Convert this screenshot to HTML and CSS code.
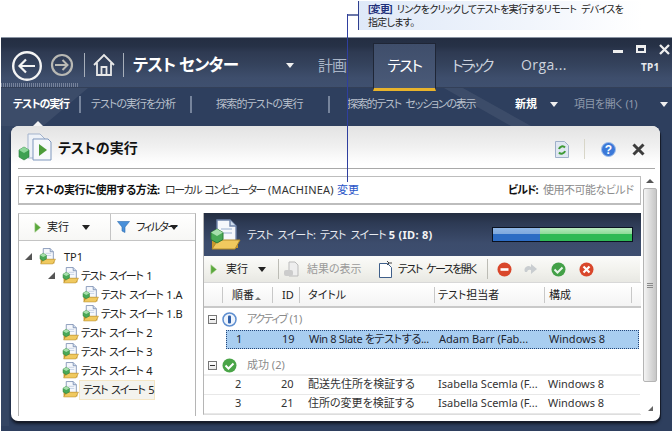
FILE: index.html
```html
<!DOCTYPE html>
<html lang="ja">
<head>
<meta charset="utf-8">
<title>テスト センター</title>
<link rel="stylesheet" href="styles.css">
</head>
<body>
<svg class="defs" width="0" height="0">
  <defs>
    <symbol id="suite" viewBox="0 0 32 32">
      <path d="M8 1h13l6 6v17H8z" fill="#f6f8fc" stroke="#6f84aa" stroke-width="1.400"/>
      <path d="M21 1v6h6" fill="#cfdcec" stroke="#6f84aa" stroke-width="1.400"/>
      <path d="M12 10h11M14 14h9" stroke="#b9c8de" stroke-width="1.400"/>
      <path d="M3 21h26v8H3z" fill="#c9982c"/>
      <path d="M9 21h22l-5 9H3z" fill="#f0c95f" stroke="#b58c2c"/>
      <path d="M8 10l6 3.500v7L8 24l-6-3.500v-7z" fill="#49a957" stroke="#2c7a35"/>
      <path d="M8 10l6 3.500L8 17l-6-3.500z" fill="#a6dfac"/>
    </symbol>
    <symbol id="play" viewBox="0 0 8 12">
      <path d="M1 .5 7.500 6 1 11.500z" fill="#5aa83c" stroke="#a9cf8f" stroke-width=".6"/>
    </symbol>
  </defs>
</svg>
<div class="callout">
  <p class="callout-text"><b>[変更]</b> リンクをクリックしてテストを実行するリモート デバイスを<br>指定します。</p>
</div>
<div class="leader-h"></div>
<div class="leader-v"></div>

<div class="app">
  <svg class="decor" width="672" height="394" viewBox="0 0 672 394">
    <path d="M0 88 0 0H146L42 88z" fill="#fff" opacity=".07"/>
    <path d="M355 0 H372 L530 88 H510z" fill="#fff" opacity=".07"/>
    <path d="M510 88H530L565 116H535z" fill="#fff" opacity=".05"/>
    <path d="M0 88V388H8V120L42 88z" fill="#fff" opacity=".03"/>
  </svg>
  <header class="top">
    <svg class="ic-back" width="32" height="32" viewBox="0 0 32 32"><circle cx="16" cy="16" r="13.800" fill="none" stroke="#f4f4f4" stroke-width="2.400"/><path d="M24 16H9M15 9.500 8.500 16l6.500 6.500" fill="none" stroke="#f4f4f4" stroke-width="2.200"/></svg>
    <svg class="ic-fwd" width="24" height="24" viewBox="0 0 24 24"><circle cx="12" cy="12" r="10" fill="none" stroke="#b9b9b4" stroke-width="2.200"/><path d="M5 12h13M12.500 7l5 5-5 5" fill="none" stroke="#b9b9b4" stroke-width="2"/></svg>
    <i class="vsep sep-a"></i>
    <svg class="ic-home" width="22" height="24" viewBox="0 0 22 24"><path d="M1 12 11 2l10 10M4 10v12h14V10M8.500 22v-8h5v8" fill="none" stroke="#e8e8e8" stroke-width="1.800"/></svg>
    <i class="vsep sep-b"></i>
    <h1 class="app-title">テスト センター</h1>
    <i class="tri tri-title"></i>
    <nav class="tabs">
      <span class="tab tab-plan">計画</span>
      <span class="tab tab-on">テスト</span>
      <span class="tab tab-track">トラック</span>
      <span class="tab tab-org">Orga...</span>
    </nav>
    <div class="win">
      <div class="win-btns">
        <i class="w-min"></i><i class="w-max"></i>
        <svg width="11" height="11" viewBox="0 0 11 11"><path d="M1 1l9 9M10 1l-9 9" stroke="#eee" stroke-width="2.300"/></svg>
      </div>
      <span class="tp">TP1</span>
    </div>
    <i class="dither"></i>
  </header>
  <nav class="subnav">
    <span class="sub sub-a">テストの実行</span>
    <i class="subsep"></i>
    <span class="sub sub-b">テストの実行を分析</span>
    <i class="subsep"></i>
    <span class="sub sub-c">探索的テストの実行</span>
    <i class="subsep"></i>
    <span class="sub sub-d">探索的テスト セッションの表示</span>
    <span class="sub sub-new">新規</span>
    <i class="tri tri-new"></i>
    <span class="sub sub-open">項目を開く (1)</span>
    <i class="tri tri-open"></i>
    <i class="caret"></i>
  </nav>

  <section class="card">
    <div class="card-head">
      <svg width="36" height="32" viewBox="0 0 36 32" class="ic-run">
        <path d="M10 2h12l5 5v19H10z" fill="#eef2f8" stroke="#a3b3cc"/>
        <path d="M15 7h15l3 3v18H15z" fill="#f7f9fc" stroke="#7f97bd"/>
        <path d="M21 12l8 6-8 6z" fill="#4c9c3a"/>
        <path d="M6 15l5 3v7l-5 3-5-3v-7z" fill="#3fa152" stroke="#2a7a3c" stroke-width=".6"/>
        <path d="M6 15l5 3-5 3-5-3z" fill="#8ed69a"/>
      </svg>
      <h2 class="card-title">テストの実行</h2>
      <div class="head-tools">
        <svg width="14" height="17" viewBox="0 0 14 17"><path d="M.5.500h9l4 4v12H.5z" fill="#dfe7f2" stroke="#9fb0c9"/><path d="M4 8a3.500 3.500 0 0 1 6-1.500M10 10a3.500 3.500 0 0 1-6 1.500" fill="none" stroke="#3e9a35" stroke-width="2"/></svg>
        <i class="head-sep"></i>
        <svg class="ic-help" width="15" height="15" viewBox="0 0 15 15"><circle cx="7.500" cy="7.500" r="7" fill="#3b78d8" stroke="#9dbdea"/><text x="7.500" y="11.500" text-anchor="middle" class="help-q">?</text></svg>
        <svg class="ic-close" width="13" height="13" viewBox="0 0 13 13"><path d="M1.500 1.500l10 10M11.500 1.500l-10 10" stroke="#3d3d3d" stroke-width="3"/></svg>
      </div>
    </div>
    <div class="card-body">
      <div class="content">
        <div class="info">
          <b class="info-label">テストの実行に使用する方法:</b>
          <span class="info-val"><span class="tight">ローカル コンピューター</span> (MACHINEA)</span>
          <a class="info-link">変更</a>
          <b class="info-build">ビルド:</b>
          <span class="info-na">使用不可能なビルド</span>
        </div>
        <div class="split">
          <aside class="left">
            <div class="left-tools">
              <div class="lt lt-run"><svg width="7" height="11"><use href="#play"/></svg><span>実行</span><i class="tri tri-dark"></i></div>
              <div class="lt lt-filter"><svg width="13" height="12" viewBox="0 0 13 12"><path d="M.5.500h12L8 6v5.500L5 10V6z" fill="#4a90d9" stroke="#2d6db0" stroke-width=".6"/></svg><span>フィルター</span><i class="tri tri-dark"></i></div>
            </div>
            <ul class="tree">
              <li class="node l0"><i class="exp"></i><svg class="fold" width="17" height="17"><use href="#suite"/></svg><span class="lbl">TP1</span></li>
              <li class="node l1"><i class="exp"></i><svg class="fold" width="17" height="17"><use href="#suite"/></svg><span class="lbl">テスト スイート <span class="num">1</span></span></li>
              <li class="node l2"><svg class="fold" width="17" height="17"><use href="#suite"/></svg><span class="lbl">テスト スイート <span class="num">1.A</span></span></li>
              <li class="node l2"><svg class="fold" width="17" height="17"><use href="#suite"/></svg><span class="lbl">テスト スイート <span class="num">1.B</span></span></li>
              <li class="node l1 leaf"><svg class="fold" width="17" height="17"><use href="#suite"/></svg><span class="lbl">テスト スイート <span class="num">2</span></span></li>
              <li class="node l1 leaf"><svg class="fold" width="17" height="17"><use href="#suite"/></svg><span class="lbl">テスト スイート <span class="num">3</span></span></li>
              <li class="node l1 leaf"><svg class="fold" width="17" height="17"><use href="#suite"/></svg><span class="lbl">テスト スイート <span class="num">4</span></span></li>
              <li class="node l1 leaf"><svg class="fold" width="17" height="17"><use href="#suite"/></svg><span class="lbl sel">テスト スイート <span class="num">5</span></span></li>
            </ul>
          </aside>
          <main class="right">
            <div class="suite-head">
              <svg width="32" height="32"><use href="#suite"/></svg>
              <span class="suite-name"><span class="tight-s">テスト スイート: テスト スイート</span> <b>5 (ID: 8)</b></span>
              <div class="bar"><div class="bar-blue" style="width:34%"></div><div class="bar-green"></div></div>
            </div>
            <div class="tools">
              <svg width="7" height="11"><use href="#play"/></svg>
              <span class="t-run">実行</span>
              <i class="tri tri-dark tri-run"></i>
              <i class="tsep tsep-a"></i>
              <svg width="17" height="17" viewBox="0 0 17 17"><path d="M6 1h6l3 3v11H6z" fill="#eee" stroke="#bbb"/><rect x="1" y="9" width="9" height="6" rx="2" fill="#ccc"/></svg>
              <span class="t-res">結果の表示</span>
              <svg class="t-doc" width="15" height="18" viewBox="0 0 15 18"><path d="M1.500 3.500h8l4 4v10h-12z" fill="#fff" stroke="#3f5f8a"/><path d="M9 1l2 2-2 2M11 3h3" fill="none" stroke="#444"/></svg>
              <span class="t-open">テスト ケースを開く</span>
              <i class="tsep tsep-b"></i>
              <svg class="t-ic" width="15" height="15" viewBox="0 0 15 15"><circle cx="7.500" cy="7.500" r="7" fill="#d9472b"/><rect x="3.500" y="6.200" width="8" height="2.600" fill="#fff"/></svg>
              <svg class="t-ic2" width="15" height="13" viewBox="0 0 15 13"><path d="M2 9a4 4 0 0 1 6-5V1l6 5-6 5V7a3 3 0 0 0-4 2z" fill="#c9cdd0"/></svg>
              <svg class="t-ic3" width="15" height="15" viewBox="0 0 15 15"><circle cx="7.500" cy="7.500" r="7" fill="#43a047"/><path d="M3.500 7.500l3 3 5-5" fill="none" stroke="#e8f5e9" stroke-width="2"/></svg>
              <svg class="t-ic4" width="15" height="15" viewBox="0 0 15 15"><circle cx="7.500" cy="7.500" r="7" fill="#d9472b"/><path d="M4.500 4.500l6 6M10.500 4.500l-6 6" stroke="#fff" stroke-width="2.200"/></svg>
            </div>
            <div class="grid-head">
              <span class="col-order">順番<i class="sort"></i></span>
              <span>ID</span>
              <span>タイトル</span>
              <span>テスト担当者</span>
              <span>構成</span>
              <span></span>
            </div>
            <div class="group g-active">
              <i class="minus"></i>
              <svg width="15" height="15" viewBox="0 0 15 15"><circle cx="7.500" cy="7.500" r="6.500" fill="#eef4fc" stroke="#5f8fd0" stroke-width="1.500"/><rect x="6" y="3.500" width="3" height="8" rx="1" fill="#2f5fa8"/></svg>
              <span class="g-name"><span class="tight">アクティブ</span> (1)</span>
            </div>
            <div class="row row-sel"><span>1</span><span>19</span><span class="win8">Win 8 Slate をテストする...</span><span>Adam Barr (Fab...</span><span>Windows 8</span></div>
            <div class="group g-pass">
              <i class="minus"></i>
              <svg width="15" height="15" viewBox="0 0 15 15"><circle cx="7.500" cy="7.500" r="7" fill="#4aa548"/><path d="M3.500 7.500l3 3 5-5" fill="none" stroke="#fff" stroke-width="2"/></svg>
              <span class="g-name">成功 (2)</span>
            </div>
            <div class="row"><span>2</span><span>20</span><span>配送先住所を検証する</span><span>Isabella Scemla (F...</span><span>Windows 8</span></div>
            <div class="row"><span>3</span><span>21</span><span>住所の変更を検証する</span><span>Isabella Scemla (F...</span><span>Windows 8</span></div>
          </main>
        </div>
      </div>
      <div class="scroll">
        <i class="sc-up"></i>
        <div class="sc-thumb"><i></i><i></i><i></i></div>
        <i class="sc-down"></i>
      </div>
    </div>
  </section>
</div>
</body>
</html>
```
FILE: styles.css
```css
* { box-sizing: border-box; }
html, body { margin: 0; padding: 0; }
body {
  width: 672px; height: 431px; overflow: hidden; background: #fff; position: relative;
  font: 11px/14px "Noto Sans", "Noto Sans CJK JP", sans-serif;
  font-feature-settings: "palt";
  color: #222;
}
h1, h2, p, ul { margin: 0; padding: 0; list-style: none; font-weight: normal; }
i { display: block; font-style: normal; }
.defs { position: absolute; }
.tight { letter-spacing: -1.500px; word-spacing: 2px; }
.tight-s { letter-spacing: -.9px; word-spacing: 3px; }

.callout {
  position: absolute; left: 358px; top: 1px; width: 284px; height: 29px;
  border-left: 1px solid #2f3f8f;
  background: linear-gradient(90deg, #dfe9f8, #f1f5fc 60%, #fff);
  padding: 2px 0 0 9px;
  z-index: 3;
}
.callout-text { font-size: 10px; line-height: 13px; letter-spacing: -.7px; word-spacing: 3px; color: #222; white-space: nowrap; }
.callout-text b { color: #1f2f7a; }
.leader-h { position: absolute; left: 347px; top: 14px; width: 11px; height: 2px; background: #6a76a8; z-index: 3; }
.leader-v { position: absolute; left: 347px; top: 14px; width: 1px; height: 168px; background: #2f3f9f; z-index: 3; }

.app {
  position: absolute; left: 1px; top: 37px; width: 671px; height: 394px;
  background: #2e3f5e; border-top: 1px solid #8a94a3;
}
.decor { position: absolute; left: 0; top: 0; }

.top {
  position: relative; height: 50px; display: flex; align-items: center;
  background: linear-gradient(180deg, #242e42 0, #263146 8px, #2e3a52 14px, #34425c 26px, #3e4e6c 40px, #3f506f 49px, #272f40 50px);
  padding-left: 10px;
}
.dither { position: absolute; left: 0; top: 45px; width: 77px; height: 4px; background: repeating-linear-gradient(90deg, #76829a 0 1px, transparent 1px 2px); }
.ic-back { flex: none; margin-top: 6px; }
.ic-fwd { flex: none; margin: 4px 0 0 7px; }
.vsep { width: 1px; height: 24px; background: #a7afba; flex: none; margin-top: 4px; }
.sep-a { margin-left: 10px; }
.ic-home { flex: none; margin: 4px 0 0 8px; }
.sep-b { margin-left: 8px; }
.app-title { margin: 4px 0 0 9px; font-size: 16.500px; font-weight: 700; color: #fff; white-space: nowrap; width: 112px; letter-spacing: -.7px; }
.tri { width: 0; height: 0; flex: none; border-left: 4.500px solid transparent; border-right: 4.500px solid transparent; border-top: 5px solid #f0f0f0; }
.tri-title { margin: 4px 0 0 41px; }
.tabs { display: flex; align-items: stretch; height: 48px; margin: 5px 0 0 0; color: #cdd3de; font-size: 15px; position: relative; align-self: flex-start; }
.tab { display: flex; align-items: center; padding-bottom: 4px; white-space: nowrap; }
.tab-plan { margin-left: 24px; width: 55px; color: #a9b5c8; letter-spacing: -1px; }
.tab-on {
  width: 63px; justify-content: center; color: #fff; padding-bottom: 2px; letter-spacing: -1.500px;
  background: linear-gradient(180deg, #3f4e6b, #4a5a78);
  border: 1px solid #1f2636; border-bottom: 3px solid #e8b32c;
}
.tab-track { margin-left: 16px; width: 69px; letter-spacing: -2.500px; }
.tab-org { font-family: "Open Sans", sans-serif; font-size: 14px; letter-spacing: .4px; }
.win { position: absolute; right: 2px; top: 4px; width: 60px; color: #e8eaee; }
.win-btns { display: flex; align-items: flex-start; justify-content: space-between; height: 16px; }
.w-min { width: 10px; height: 3px; background: #eee; margin-top: 8px; margin-left: 3px; }
.w-max { width: 10px; height: 8px; border: 2px solid #eee; border-top-width: 3px; margin-top: 3px; }
.win-btns svg { margin-top: 2px; }
.tp { display: block; font-weight: 700; font-size: 10px; margin: 2px 0 0 31px; letter-spacing: .2px; }

.subnav { position: relative; height: 38px; display: flex; align-items: center; padding: 0 0 6px 12px; color: #b8c0cc; }
.sub { white-space: nowrap; }
.sub-a { color: #fff; font-weight: 700; width: 66px; letter-spacing: -1.100px; }
.subsep { width: 2px; height: 17px; background: #76849c; flex: none; }
.sub-b { margin-left: 10px; width: 99px; letter-spacing: -1px; }
.sub-c { margin-left: 24px; width: 112px; letter-spacing: -.8px; }
.sub-d { margin-left: 17px; width: 168px; letter-spacing: -1.250px; word-spacing: 3px; }
.sub-new { color: #fff; font-weight: 700; width: 35px; }
.tri-new { margin-right: 16px; }
.sub-open { color: #8f9aac; width: 86px; letter-spacing: -.5px; word-spacing: 1px; }
.caret { position: absolute; left: 32px; bottom: 0; width: 0; height: 0; border-left: 5px solid transparent; border-right: 5px solid transparent; border-bottom: 5px solid #f4f4f4; }

.card {
  margin-left: 10px; width: 649px; height: 295px;
  background: #fff; border-radius: 8px 8px 7px 7px;
  box-shadow: 1px 2px 0 #161c2a, 0 3px 3px rgba(10,15,25,.7);
  position: relative;
  padding: 0 5px 0 7px;
}
.card-head {
  margin: 0 -5px 0 -7px; padding: 0 15px 0 7px; height: 43px; display: flex; align-items: center;
  background: linear-gradient(180deg, #e3e3e3, #f0f0f0 20px, #fff 38px);
  border-radius: 8px 8px 0 0;
  position: relative;
}
.card-head::after { content: ""; position: absolute; left: 7px; right: 5px; bottom: 0; height: 1px; background: #a9a9a9; }
.ic-run { flex: none; }
.card-title { font-size: 14px; font-weight: 700; color: #111; margin-left: 4px; }
.head-tools { margin-left: auto; display: flex; align-items: center; margin-top: 3px; }
.head-sep { width: 1px; height: 20px; background: #d8d6c8; margin: 0 16px 0 15px; }
.ic-close { margin-left: 16px; }
.help-q { font-size: 12px; font-weight: 700; fill: #fff; font-family: "Liberation Sans", sans-serif; }

.card-body { display: flex; gap: 2px; padding-top: 7px; }
.content { width: 623px; flex: none; }
.info {
  height: 29px; border: 1px solid #bdbdbd; border-width: 1px 1px 2px 1px; display: flex; align-items: center; padding-left: 6px; white-space: nowrap;
}
.info-label { width: 140px; font-weight: 700; color: #111; letter-spacing: -.4px; }
.info-val { width: 172px; color: #333; letter-spacing: .2px; }
.info-link { color: #2a55c8; width: 171px; }
.info-build { width: 35px; color: #111; letter-spacing: -1px; }
.info-na { color: #8b8b8b; letter-spacing: -.5px; }

.split { display: flex; gap: 7px; margin-top: 8px; }
.left { width: 178px; height: 203px; border: 1px solid #b5b5b5; border-bottom: 0; border-top-color: #ccc; }
.left-tools { height: 27px; display: flex; border-bottom: 1px solid #c4c4c4; background: linear-gradient(180deg, #fff, #f7f7f5); }
.lt { display: flex; align-items: center; }
.lt-run { width: 92px; border-right: 1px solid #c4c4c4; padding-left: 15px; }
.lt-run span { margin-left: 6px; width: 35px; }
.lt-filter { padding-left: 6px; }
.lt-filter span { margin-left: 6px; width: 34px; letter-spacing: -1.500px; white-space: nowrap; }
.tri-dark { border-top-color: #222; }
.tree { padding-top: 6px; }
.node { height: 19px; display: flex; align-items: center; white-space: nowrap; color: #222; }
.l0 { padding-left: 6px; }
.l1 { padding-left: 29px; }
.l2 { padding-left: 63px; }
.leaf { padding-left: 43px; }
.exp { width: 0; height: 0; border-style: solid; border-width: 0 0 7px 7px; border-color: transparent transparent #555 transparent; margin-right: 7px; flex: none; }
.fold { flex: none; }
.lbl { margin-left: 2px; letter-spacing: -1.400px; word-spacing: 2.500px; }
.num { letter-spacing: 0; }
.l0 .lbl { margin-left: 8px; letter-spacing: 0; word-spacing: 0; }
.sel { background: #f3f3ee; border: 1px solid #f4e6c4; height: 20px; line-height: 17px; padding: 0 3px; margin-left: 0; width: 76px; }

.right { width: 438px; height: 202px; border-left: 1px solid #b5b5b5; border-bottom: 1px solid #ddd; }
.suite-head {
  height: 43px; display: flex; align-items: center; padding-left: 5px; color: #e8ebf1;
  background: linear-gradient(180deg, #232d40 0, #2d3a54 10px, #3c4c6c 30px, #3d4e6f);
  position: relative;
}
.suite-name { margin-left: 6px; white-space: nowrap; }
.suite-name b { font-weight: 700; color: #f4f4f4; letter-spacing: .3px; }
.bar { margin-left: auto; margin-right: 8px; width: 141px; height: 15px; border: 1px solid #0b1220; display: flex; }
.bar-blue { background: linear-gradient(180deg, #8fb6e6 0, #7fa9de 45%, #2c6cc4 50%, #2c6cc4); }
.bar-green { flex: 1; background: linear-gradient(180deg, #b9eabf 0, #8edb98 45%, #2fb955 50%, #2fb955); }

.tools {
  height: 26px; display: flex; align-items: center; padding-left: 6px; white-space: nowrap;
  background: linear-gradient(180deg, #fbfbf9, #f1f1ec 60%, #e8e8e3); margin-right: 1px;
}
.t-run { margin-left: 9px; width: 32px; }
.tri-run { margin-right: 12px; }
.tsep { width: 1px; height: 20px; background: #bcbcb5; flex: none; }
.tsep-a { margin-right: 4px; }
.t-res { margin-left: 7px; color: #9a9a9a; width: 71px; }
.t-doc { flex: none; }
.t-open { margin-left: 5px; width: 89px; letter-spacing: -1.500px; word-spacing: 3px; }
.tsep-b { margin-right: 9px; }
.t-ic2 { margin-left: 11px; }
.t-ic3 { margin-left: 13px; }
.t-ic4 { margin-left: 13px; }

.grid-head {
  display: grid; height: 26px; padding-left: 18px; align-items: center;
  border-bottom: 2px solid #c9c9c9; border-top: 1px solid #d8d8d8;
  background: linear-gradient(180deg, #fff, #f4f4f4);
  grid-template-columns: 50px 27px 135px 110px 87px 1fr;
}
.grid-head span { height: 16px; border-left: 1px solid #c8c8c8; padding-left: 9px; white-space: nowrap; line-height: 16px; }
.grid-head span:nth-child(n+3) { padding-left: 8px; }
.grid-head span:nth-child(4) { padding-left: 3px; }
.grid-head span:nth-child(5) { padding-left: 4px; }
.col-order { display: flex; }
.sort { width: 0; height: 0; align-self: flex-end; margin: 0 0 3px 1px; border-left: 3px solid transparent; border-right: 3px solid transparent; border-bottom: 3px solid #777; }
.group { display: flex; align-items: center; padding-left: 4px; color: #8a8a8a; }
.g-active { height: 22px; }
.g-pass { height: 27px; padding-top: 7px; border-bottom: 2px solid #eee; }
.minus { width: 9px; height: 9px; border: 1px solid #777; position: relative; margin-right: 5px; flex: none; background: linear-gradient(#fff, #e8e8e8); }
.minus::after { content: ""; position: absolute; left: 1px; top: 3px; width: 5px; height: 1px; background: #333; }
.g-name { margin-left: 10px; white-space: nowrap; }
.row {
  display: grid; height: 19px; align-items: center; border-bottom: 1px solid #e8e8e8; margin-right: 1px; padding: 0 0 2px 31px;
  white-space: nowrap; color: #333; grid-template-columns: 46px 27px 130px 110px 90px;
}
.row-sel { margin-left: 22px; padding-left: 9px; background: #a8cdf0; border: 1px dotted #24467a; color: #1d2530; margin-right: 2px; }
.win8 { letter-spacing: -.35px; }

.scroll { width: 14px; height: 240px; display: flex; flex-direction: column; align-items: center; }
.sc-up { margin-top: 3px; width: 0; height: 0; border-left: 4px solid transparent; border-right: 4px solid transparent; border-bottom: 4px solid #555; }
.sc-thumb {
  width: 14px; height: 194px; margin-top: 5px; border: 1px solid #b4b4b4; border-radius: 2px;
  background: linear-gradient(90deg, #f4f4f4, #dcdcdc 50%, #c6c6c6);
  display: flex; flex-direction: column; align-items: center; justify-content: center; gap: 1px;
}
.sc-thumb i { width: 6px; height: 1px; background: #8a8a8a; }
.sc-down { margin-top: 24px; width: 0; height: 0; border-style: solid; border-width: 0 0 5px 5px; border-color: transparent transparent #666 transparent; }
```
